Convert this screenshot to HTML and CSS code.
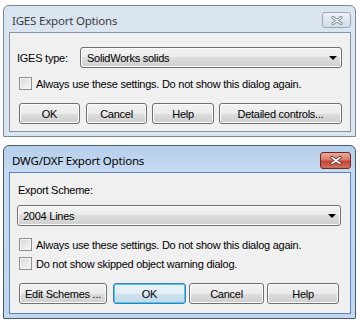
FILE: index.html
```html
<!DOCTYPE html>
<html>
<head>
<meta charset="utf-8">
<link rel="stylesheet" href="styles.css">
</head>
<body>
<div class="page">
  <div class="win inactive">
    <div class="titlebar">
      <span class="title">IGES Export Options</span>
      <span class="close"><svg width="12" height="9" viewBox="0 0 12 9"><path d="M2 1.5L10 7.5M10 1.5L2 7.5" stroke="#7d8794" stroke-width="3" stroke-linecap="round"/><path d="M2 1.5L10 7.5M10 1.5L2 7.5" stroke="#f4f6f9" stroke-width="1.4" stroke-linecap="round"/></svg></span>
    </div>
    <div class="client c1">
      <div class="typerow">
        <span class="lbl">IGES type:</span>
        <div class="combo combo1"><span>SolidWorks solids</span><i class="arrow"></i></div>
      </div>
      <label class="check c1check"><span class="box"></span><span>Always use these settings. Do not show this dialog again.</span></label>
      <div class="buttons b1">
        <button class="btn w-ok1">OK</button>
        <button class="btn w-cancel1">Cancel</button>
        <button class="btn w-help1">Help</button>
        <button class="btn w-det">Detailed controls...</button>
      </div>
    </div>
  </div>

  <div class="win active">
    <div class="titlebar">
      <span class="title">DWG/DXF Export Options</span>
      <span class="close red"><svg width="12" height="9" viewBox="0 0 12 9"><path d="M2 1.5L10 7.5M10 1.5L2 7.5" stroke="#5a2a24" stroke-width="3.2" stroke-linecap="round"/><path d="M2 1.5L10 7.5M10 1.5L2 7.5" stroke="#ffffff" stroke-width="1.6" stroke-linecap="round"/></svg></span>
    </div>
    <div class="client c2">
      <div class="lbl2">Export Scheme:</div>
      <div class="combo combo2"><span>2004 Lines</span><i class="arrow"></i></div>
      <label class="check c2check1"><span class="box"></span><span>Always use these settings. Do not show this dialog again.</span></label>
      <label class="check c2check2"><span class="box"></span><span>Do not show skipped object warning dialog.</span></label>
      <div class="buttons b2">
        <button class="btn w-edit">Edit Schemes ...</button>
        <button class="btn default w-ok2">OK</button>
        <button class="btn w-cancel2">Cancel</button>
        <button class="btn w-help2">Help</button>
      </div>
    </div>
  </div>
</div>
</body>
</html>
```

FILE: styles.css
```css
* { box-sizing: border-box; }
body {
  margin: 0;
  background: #ffffff;
  font-family: "Liberation Sans", Arial, sans-serif;
  font-size: 11px;
  letter-spacing: -0.25px;
  color: #000;
}
.page {
  padding: 5px 0 0 3px;
  display: flex;
  flex-direction: column;
  gap: 8px;
}
.win {
  width: 353px;
  border: 1px solid #6f7c8c;
  border-radius: 6px 6px 1px 1px;
  display: flex;
  flex-direction: column;
}
.win.inactive {
  background: #dbe5f1;
  border-color: #7d8896;
}
.win.active {
  background: linear-gradient(#b6cfeb, #c6daf1 26px, #c2d7ef);
  border-color: #4a5b70;
}
.titlebar {
  height: 26px;
  display: flex;
  align-items: flex-start;
  justify-content: space-between;
  padding: 0 4px 0 8px;
}
.title {
  font-family: "Noto Sans", "Open Sans", sans-serif;
  font-size: 11.5px;
  letter-spacing: -0.2px;
  line-height: 16px;
  margin-top: 7px;
}
.inactive .title { color: #3a3a3a; }
.close {
  margin-top: 6px;
  width: 29px;
  height: 16px;
  border: 1px solid #9ba7b6;
  border-radius: 3px;
  background: linear-gradient(#eef2f7, #dfe6ee 50%, #d5dde8);
  display: flex;
  align-items: center;
  justify-content: center;
}
.close.red {
  width: 31px;
  height: 17px;
  border-color: #6b2a24;
  background: linear-gradient(#e9a999, #d77b69 45%, #c44434 55%, #d0705a);
}
.client {
  margin: 0 4px 4px 5px;
  background: #f0f0f0;
  border: 1px solid #8a96a6;
  display: flex;
  flex-direction: column;
}
.active .client { border-color: #5b84b8; }
.c1 { padding: 14px 6px 7px 9px; }
.c2 { padding: 11px 9px 9px 7px; }
.typerow {
  display: flex;
  align-items: center;
}
.lbl {
  width: 63px;
  margin-left: -2px;
}
.combo {
  height: 21px;
  border: 1px solid #707070;
  border-radius: 3px;
  background: linear-gradient(#f2f2f2, #ebebeb 50%, #dddddd 50%, #cfcfcf);
  box-shadow: inset 0 0 0 1px #fcfcfc;
  display: flex;
  align-items: center;
  justify-content: space-between;
  padding: 0 4px 0 6px;
}
.combo1 { width: 262px; }
.combo2 { width: 324px; margin-top: 8px; padding-left: 5px; }
.arrow {
  width: 0;
  height: 0;
  border-left: 4px solid transparent;
  border-right: 4px solid transparent;
  border-top: 4px solid #000;
}
.lbl2 { line-height: 13px; margin-left: 1px; }
.check {
  display: flex;
  align-items: center;
  gap: 4px;
  height: 13px;
}
.box {
  width: 13px;
  height: 13px;
  border: 1px solid #8e8f8f;
  background: linear-gradient(135deg, #d8d8d8, #f6f6f6);
  box-shadow: inset 0 0 0 1px #f4f4f4;
  flex: none;
}
.c1check { margin-top: 9px; }
.c2check1 { margin-top: 12px; margin-left: 2px; }
.c2check2 { margin-top: 6px; margin-left: 2px; }
.buttons { display: flex; }
.b1 { margin-top: 13px; }
.b2 { margin-top: 13px; margin-left: 2px; }
.btn {
  height: 21px;
  font-family: inherit;
  font-size: 11px;
  letter-spacing: -0.25px;
  color: #000;
  border: 1px solid #707070;
  border-radius: 3px;
  background: linear-gradient(#f2f2f2, #ebebeb 50%, #dddddd 50%, #cfcfcf);
  box-shadow: inset 0 0 0 1px #fcfcfc;
  padding: 0;
  margin: 0;
}
.btn.default {
  border-color: #3c7fb1;
  box-shadow: inset 0 0 0 1px #48c9f5;
  background: linear-gradient(#eaf4fa, #e2eef6 50%, #cfe2ef 50%, #c2d8e8);
}
.w-ok1 { width: 61px; }
.w-cancel1 { width: 61px; margin-left: 6px; }
.w-help1 { width: 62px; margin-left: 5px; }
.w-det { width: 123px; margin-left: 5px; }
.w-edit { width: 88px; }
.w-ok2 { width: 73px; margin-left: 6px; }
.w-cancel2 { width: 75px; margin-left: 3px; }
.w-help2 { width: 72px; margin-left: 3px; }
```
